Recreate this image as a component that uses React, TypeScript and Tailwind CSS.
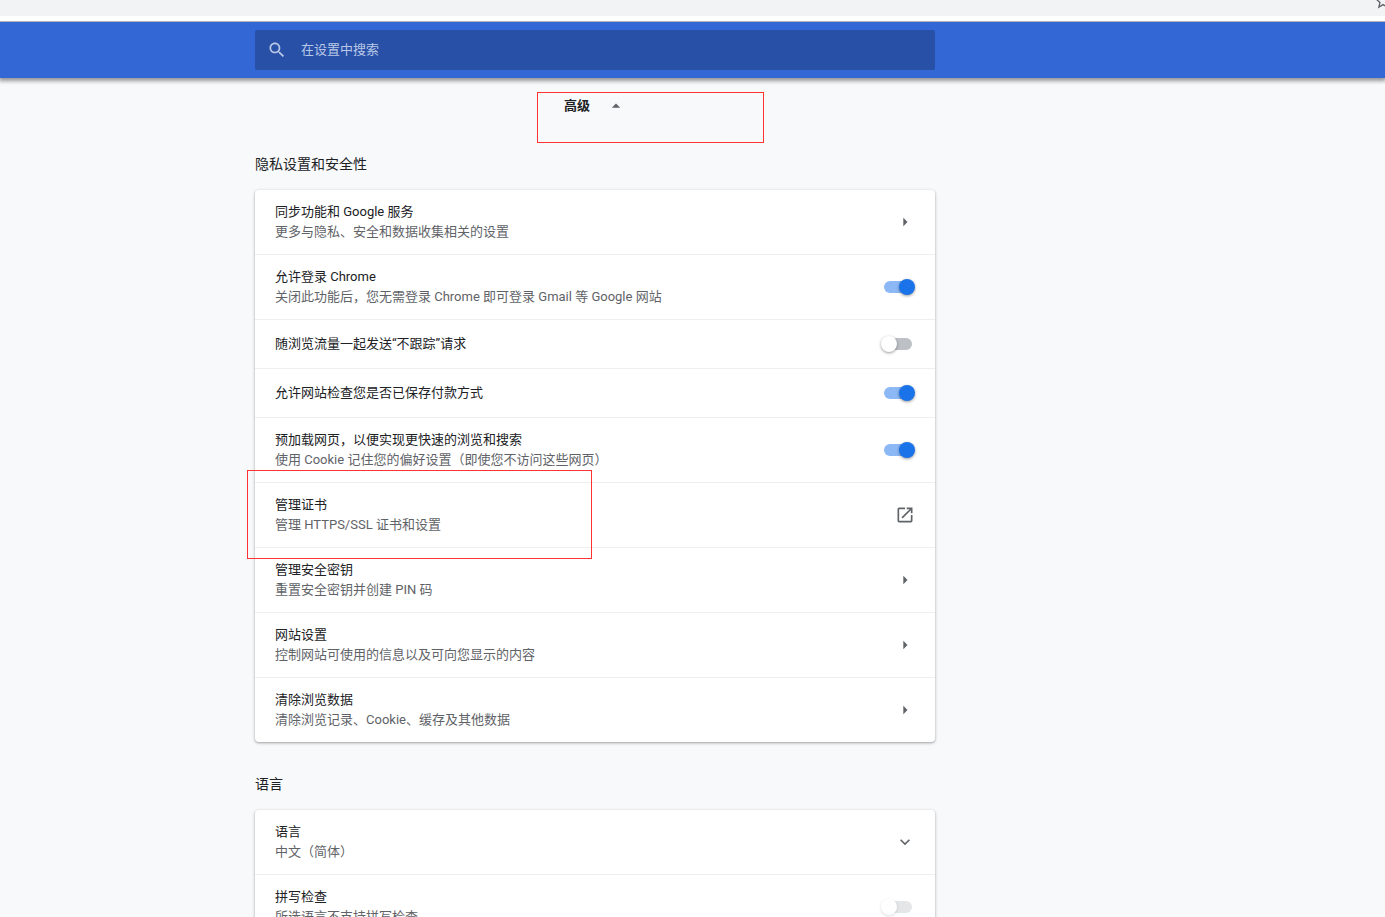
import { useState } from 'react';
import type { ReactNode } from 'react';

type RowControl = 'arrow' | 'toggle' | 'external' | 'expand';

interface SettingRow {
  id: string;
  title: string;
  description?: string;
  control: RowControl;
  disabled?: boolean;
  marked?: boolean;
}

const PRIVACY_ROWS: SettingRow[] = [
  { id: 'sync', title: '同步功能和 Google 服务', description: '更多与隐私、安全和数据收集相关的设置', control: 'arrow' },
  { id: 'signin', title: '允许登录 Chrome', description: '关闭此功能后，您无需登录 Chrome 即可登录 Gmail 等 Google 网站', control: 'toggle' },
  { id: 'dnt', title: '随浏览流量一起发送“不跟踪”请求', control: 'toggle' },
  { id: 'payment', title: '允许网站检查您是否已保存付款方式', control: 'toggle' },
  { id: 'preload', title: '预加载网页，以便实现更快速的浏览和搜索', description: '使用 Cookie 记住您的偏好设置（即使您不访问这些网页）', control: 'toggle' },
  { id: 'certs', title: '管理证书', description: '管理 HTTPS/SSL 证书和设置', control: 'external', marked: true },
  { id: 'keys', title: '管理安全密钥', description: '重置安全密钥并创建 PIN 码', control: 'arrow' },
  { id: 'site', title: '网站设置', description: '控制网站可使用的信息以及可向您显示的内容', control: 'arrow' },
  { id: 'clear', title: '清除浏览数据', description: '清除浏览记录、Cookie、缓存及其他数据', control: 'arrow' },
];

const LANGUAGE_ROWS: SettingRow[] = [
  { id: 'language', title: '语言', description: '中文（简体）', control: 'expand' },
  { id: 'spellcheck', title: '拼写检查', description: '所选语言不支持拼写检查', control: 'toggle', disabled: true },
];

const ICONS = {
  search:
    'M15.5 14h-.79l-.28-.27C15.41 12.59 16 11.11 16 9.5 16 5.91 13.09 3 9.5 3S3 5.91 3 9.5 5.91 16 9.5 16c1.61 0 3.09-.59 4.23-1.57l.27.28v.79l5 4.99L20.49 19l-4.99-5zm-6 0C7.01 14 5 11.99 5 9.5S7.01 5 9.5 5 14 7.01 14 9.5 11.99 14 9.5 14z',
  arrow: 'M10 17l5-5-5-5v10z',
  up: 'M7 14l5-5 5 5z',
  expand: 'M16.59 8.59L12 13.17 7.41 8.59 6 10l6 6 6-6z',
  external:
    'M19 19H5V5h7V3H5c-1.11 0-2 .9-2 2v14c0 1.1.89 2 2 2h14c1.1 0 2-.9 2-2v-7h-2v7zM14 3v2h3.59l-9.83 9.83 1.41 1.41L19 6.41V10h2V3h-7z',
  star: 'M22 9.24l-7.19-.62L12 2 9.19 8.63 2 9.24l5.46 4.73L5.82 21 12 17.27 18.18 21l-1.63-7.03L22 9.24zM12 15.4l-3.76 2.27 1-4.28-3.32-2.88 4.38-.38L12 6.1l1.71 4.04 4.38.38-3.32 2.88 1 4.28L12 15.4z',
};

function Icon({ name, className = '' }: { name: keyof typeof ICONS; className?: string }) {
  return (
    <svg viewBox="0 0 24 24" className={`h-5 w-5 shrink-0 fill-current ${className}`} aria-hidden="true">
      <path d={ICONS[name]} />
    </svg>
  );
}

function Toggle({ id, checked, disabled, onChange }: { id: string; checked: boolean; disabled?: boolean; onChange: () => void }) {
  return (
    <input
      id={id}
      type="checkbox"
      checked={checked}
      disabled={disabled}
      onChange={onChange}
      className="relative h-4 w-[34px] shrink-0 cursor-pointer appearance-none before:absolute before:top-0.5 before:left-[3px] before:h-3 before:w-7 before:rounded-full before:bg-[#bdc1c6] after:absolute after:top-0 after:left-0 after:h-4 after:w-4 after:rounded-full after:bg-white after:shadow-[0_1px_3px_rgba(0,0,0,0.4)] checked:before:bg-[#8cb8f6] checked:after:left-[18px] checked:after:bg-[#1a73e8] disabled:cursor-default disabled:before:opacity-40 disabled:after:shadow-[0_1px_3px_rgba(0,0,0,0.15)]"
    />
  );
}

function Row({ row, checked, onToggle }: { row: SettingRow; checked: boolean; onToggle: () => void }) {
  const body = (
    <>
      <span className="block text-[#202124]">{row.title}</span>
      {row.description && <span className="block text-[#5f6368]">{row.description}</span>}
    </>
  );
  const rowClass = `flex w-full items-center justify-between px-5 text-left ${row.description ? 'py-3' : 'py-3.5'}`;

  return (
    <li className="relative">
      {row.control === 'toggle' ? (
        <div className={rowClass}>
          <label htmlFor={row.id}>{body}</label>
          <Toggle id={row.id} checked={checked} disabled={row.disabled} onChange={onToggle} />
        </div>
      ) : (
        <button type="button" className={rowClass}>
          <span>{body}</span>
          <Icon name={row.control} className="text-[#5f6368]" />
        </button>
      )}
      {row.marked && (
        <div className="pointer-events-none absolute -top-[13px] -left-2 z-10 h-[89px] w-[345px] border border-[#f33]" />
      )}
    </li>
  );
}

function Section({ title, children }: { title: string; children: ReactNode }) {
  return (
    <section>
      <h2 className="pt-8 pb-4 text-sm leading-5 text-[#202124]">{title}</h2>
      <ul className="divide-y divide-[#eeeeee] rounded bg-white shadow-[0_1px_2px_0_rgba(60,64,67,0.3),0_1px_3px_1px_rgba(60,64,67,0.15)]">
        {children}
      </ul>
    </section>
  );
}

export default function App() {
  const [query, setQuery] = useState('');
  const [enabled, setEnabled] = useState<Record<string, boolean>>({
    signin: true,
    payment: true,
    preload: true,
  });

  const renderRow = (row: SettingRow) => (
    <Row
      key={row.id}
      row={row}
      checked={!!enabled[row.id]}
      onToggle={() => setEnabled(prev => ({ ...prev, [row.id]: !prev[row.id] }))}
    />
  );

  return (
    <div
      lang="zh-CN"
      className="flex h-screen flex-col overflow-hidden bg-[#f8f9fb] font-[Roboto,'Noto_Sans_CJK_SC',sans-serif] text-[13px] leading-5"
    >
      {/* 浏览器工具栏底部 */}
      <div className="relative z-20 shrink-0 border-b border-[#b6b4b6] bg-white pb-[5px]">
        <div className="relative h-4 overflow-hidden bg-[#f1f3f4]">
          <Icon name="star" className="absolute -top-[9px] -right-2 text-[#5f6368]" />
        </div>
      </div>

      <header className="z-10 shrink-0 bg-[#3367d6] py-2 pl-[255px] shadow-[0_2px_4px_1px_rgba(0,0,0,0.4)]">
        <div className="flex h-10 max-w-[680px] items-center rounded-xs bg-[#2850a7] px-3 text-[#b9c8e6]">
          <Icon name="search" />
          <input
            type="text"
            aria-label="在设置中搜索"
            placeholder="在设置中搜索"
            value={query}
            onChange={e => setQuery(e.target.value)}
            className="ml-3.5 flex-1 bg-transparent text-white outline-none placeholder:text-[#b9c8e6]"
          />
        </div>
      </header>

      <main className="flex-1 overflow-y-auto pl-[255px] [scrollbar-width:none]">
        <div className="max-w-[680px] pt-[18px]">
          <div className="relative mx-auto mb-1.5 flex w-fit">
            <button type="button" className="flex items-center gap-4 font-bold text-[#202124]">
              高级
              <Icon name="up" className="text-[#5f6368]" />
            </button>
            <div className="pointer-events-none absolute -top-1 -left-[27px] z-10 h-[51px] w-[227px] border border-[#f33]" />
          </div>

          <Section title="隐私设置和安全性">{PRIVACY_ROWS.map(renderRow)}</Section>
          <Section title="语言">{LANGUAGE_ROWS.map(renderRow)}</Section>
        </div>
      </main>
    </div>
  );
}
